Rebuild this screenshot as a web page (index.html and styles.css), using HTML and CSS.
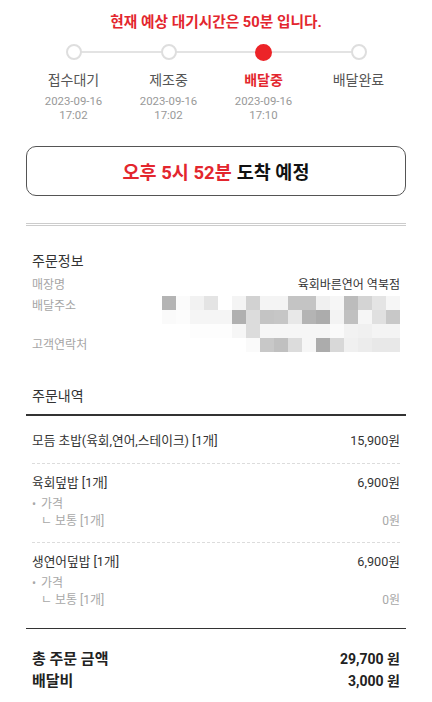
FILE: index.html
```html
<!DOCTYPE html>
<html lang="ko">
<head>
<meta charset="utf-8">
<title>주문 상태</title>
<link rel="stylesheet" href="styles.css">
</head>
<body>
<div class="page">
  <div class="wait-title">현재 예상 대기시간은 50분 입니다.</div>

  <div class="steps">
    <div class="step step-first">
      <div class="dot-row"><span class="dot"></span></div>
      <div class="step-label">접수대기</div>
      <div class="step-date">2023-09-16<br>17:02</div>
    </div>
    <div class="step">
      <div class="dot-row"><span class="dot"></span></div>
      <div class="step-label">제조중</div>
      <div class="step-date">2023-09-16<br>17:02</div>
    </div>
    <div class="step step-active">
      <div class="dot-row"><span class="dot"></span></div>
      <div class="step-label">배달중</div>
      <div class="step-date">2023-09-16<br>17:10</div>
    </div>
    <div class="step step-last">
      <div class="dot-row"><span class="dot"></span></div>
      <div class="step-label">배달완료</div>
      <div class="step-date"></div>
    </div>
  </div>

  <div class="arrival"><span class="arrival-time">오후 5시 52분</span> 도착 예정</div>

  <div class="double-rule"></div>

  <section class="info">
    <h2 class="section-title">주문정보</h2>
    <div class="info-grid">
      <div class="info-label">매장명</div>
      <div class="info-value">육회바른연어 역북점</div>

      <div class="info-label info-label-tall">배달주소</div>
      <div class="info-value">
        <div class="mosaic" id="mosaic-addr"></div>
      </div>

      <div class="info-label info-label-short">고객연락처</div>
      <div class="info-value">
        <div class="mosaic" id="mosaic-phone"></div>
      </div>
    </div>
  </section>

  <section class="order">
    <h2 class="section-title order-title">주문내역</h2>
    <div class="order-list">
      <div class="item">
        <div class="item-row">
          <span>모듬 초밥(육회,연어,스테이크) [1개]</span>
          <span>15,900원</span>
        </div>
      </div>
      <div class="item">
        <div class="item-row">
          <span>육회덮밥 [1개]</span>
          <span>6,900원</span>
        </div>
        <div class="sub-row sub-head"><span><span class="bullet">•</span>가격</span></div>
        <div class="sub-row sub-opt"><span>ㄴ 보통 [1개]</span><span>0원</span></div>
      </div>
      <div class="item item-last">
        <div class="item-row">
          <span>생연어덮밥 [1개]</span>
          <span>6,900원</span>
        </div>
        <div class="sub-row sub-head"><span><span class="bullet">•</span>가격</span></div>
        <div class="sub-row sub-opt"><span>ㄴ 보통 [1개]</span><span>0원</span></div>
      </div>
    </div>
  </section>

  <section class="totals">
    <div class="total-row"><span>총 주문 금액</span><span class="total-value">29,700 원</span></div>
    <div class="total-row"><span>배달비</span><span class="total-value">3,000 원</span></div>
  </section>
</div>
<script src="script.js"></script>
</body>
</html>
```

FILE: script.js
```js
(function () {
  var addr = [
    ["b4","fb","f2","e4","ff","f4","d2","f4","f4","c4","c4","f0","f6","bc","d4","e4","f6"],
    ["fa","fc","f5","f5","f5","b0","dc","c4","c6","e8","b4","ac","f3","c0","f6","e0","c8"],
    ["ff","ff","fd","fd","fd","f6","dc","f6","f6","f6","f6","f6","fa","f2","f0","f4","f4"]
  ];
  var phone = [
    ["ff","ff","ff","ff","ff","ff","fa","c8","c0","dc","f6","ac","d8","f0","ec","e8","e8"]
  ];
  function fill(id, rows) {
    var el = document.getElementById(id);
    rows.forEach(function (row) {
      row.forEach(function (c) {
        var cell = document.createElement("span");
        cell.className = "cell";
        cell.style.background = "#" + c + c + c;
        el.appendChild(cell);
      });
    });
  }
  fill("mosaic-addr", addr);
  fill("mosaic-phone", phone);
})();
```

FILE: styles.css
```css
html, body {
  margin: 0;
  padding: 0;
  background: #fff;
}
body {
  font-family: Roboto, "Noto Sans CJK KR", sans-serif;
  color: #333;
}
.page {
  padding: 0 26px;
}
.wait-title {
  padding-top: 12px;
  line-height: 20px;
  font-size: 14.7px;
  font-weight: 700;
  color: #e3262e;
  text-align: center;
}
.steps {
  display: grid;
  grid-template-columns: repeat(4, 1fr);
  margin-top: 12px;
}
.step {
  display: flex;
  flex-direction: column;
  align-items: center;
}
.dot-row {
  align-self: stretch;
  height: 16px;
  display: flex;
  justify-content: center;
  align-items: center;
  background: linear-gradient(#e3e3e3, #e3e3e3) center / 100% 2px no-repeat;
}
.step-first .dot-row {
  background: linear-gradient(#e3e3e3, #e3e3e3) right center / 50% 2px no-repeat;
}
.step-last .dot-row {
  background: linear-gradient(#e3e3e3, #e3e3e3) left center / 50% 2px no-repeat;
}
.dot {
  width: 16px;
  height: 16px;
  box-sizing: border-box;
  border: 2px solid #dedede;
  border-radius: 50%;
  background: #fff;
}
.step-active .dot {
  width: 17px;
  height: 17px;
  border-color: #ec2428;
  background: #ec2428;
}
.step-label {
  margin-top: 10px;
  line-height: 20px;
  font-size: 14px;
  color: #555;
}
.step-active .step-label {
  color: #e3262e;
  font-weight: 700;
}
.step-date {
  margin-top: 5px;
  line-height: 13.5px;
  font-size: 11.4px;
  color: #999;
  text-align: center;
  min-height: 27px;
}
.arrival {
  margin-top: 24px;
  height: 50px;
  box-sizing: border-box;
  border: 1px solid #555;
  border-radius: 10px;
  display: flex;
  align-items: center;
  justify-content: center;
  font-size: 18.5px;
  font-weight: 700;
  color: #111;
}
.arrival-time {
  color: #e3262e;
  margin-right: 5px;
}
.double-rule {
  margin-top: 27px;
  border-top: 3px double #cccccc;
}
.section-title {
  margin: 0;
  padding: 0 6px;
  line-height: 20px;
  font-size: 14px;
  font-weight: 400;
  color: #333;
}
.info {
  margin-top: 25px;
}
.info-grid {
  margin-top: 4px;
  padding: 0 6px;
  display: grid;
  grid-template-columns: auto 1fr;
  font-size: 12px;
}
.info-label {
  line-height: 21px;
  color: #a5a5a5;
}
.info-label-tall {
  line-height: 21px;
}
.info-label-short {
  line-height: 14px;
}
.info-value {
  line-height: 21px;
  text-align: right;
  color: #333;
  display: flex;
  justify-content: flex-end;
}
.mosaic {
  display: grid;
  grid-template-columns: repeat(17, 14px);
  grid-auto-rows: 14px;
  filter: blur(0.4px);
}
.cell {
  display: block;
}
.order {
  margin-top: 34px;
}
.order-title {
  padding-bottom: 8px;
  border-bottom: 2px solid #333;
}
.order-list {
  margin-top: 6px;
  padding: 0 6px;
}
.item {
  padding: 9px 0 12px;
  border-bottom: 1px dashed #dcdcdc;
}
.item-last {
  border-bottom: none;
}
.item-row {
  display: flex;
  justify-content: space-between;
  line-height: 20px;
  font-size: 12.7px;
  color: #333;
}
.sub-row {
  display: flex;
  justify-content: space-between;
  line-height: 17px;
  font-size: 12px;
  color: #a8a8a8;
}
.sub-head {
  margin-top: 3px;
}
.bullet {
  display: inline-block;
  width: 9px;
  font-size: 12px;
}
.sub-opt {
  padding-left: 9px;
}
.totals {
  margin-top: 7px;
  border-top: 1px solid #333;
  padding: 19px 6px 0;
}
.total-row {
  display: flex;
  justify-content: space-between;
  align-items: baseline;
  line-height: 22px;
  font-size: 15px;
  font-weight: 700;
  color: #222;
}
.total-value {
  font-size: 14px;
}
```
